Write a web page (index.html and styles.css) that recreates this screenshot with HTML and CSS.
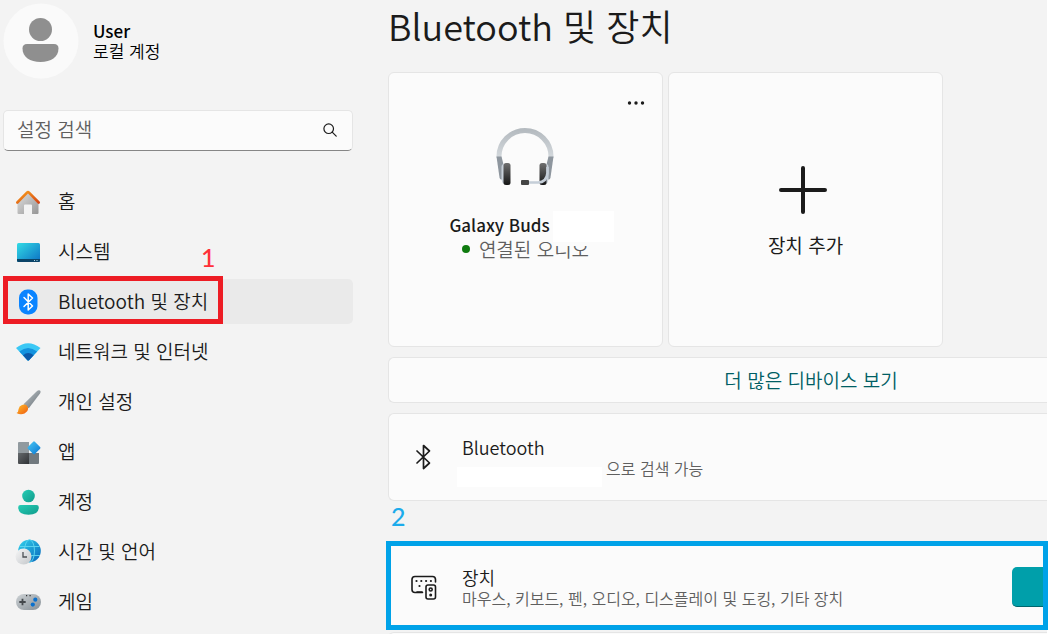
FILE: index.html
```html
<!DOCTYPE html>
<html lang="ko">

<head>
  <meta charset="UTF-8">
  <title>Bluetooth 및 장치</title>
  <link rel="stylesheet" href="styles.css">
</head>

<body>
  <div class="window">
    <aside class="sidebar">
      <div class="profile">
        <svg class="avatar" viewBox="0 0 76 76">
          <circle cx="38" cy="38" r="37.500" fill="#fafafa" />
          <circle cx="37.500" cy="26.500" r="11.500" fill="#8f8f8f" />
          <path d="M24 41h27q4.500 0 4.500 4.500C55.500 54 48 59 37.500 59S19.500 54 19.500 45.500Q19.500 41 24 41z" fill="#8f8f8f" />
        </svg>
        <div>
          <div class="profile-name">User</div>
          <div class="profile-type">로컬 계정</div>
        </div>
      </div>

      <div class="search">
        <input type="text" id="search" class="search-input" placeholder="설정 검색" aria-label="설정 검색">
        <svg class="search-icon" viewBox="0 0 14 14" fill="none" stroke="#1b1b1b" stroke-width="1.200" stroke-linecap="round">
          <circle cx="5.700" cy="5.700" r="4.800" />
          <path d="M9.200 9.200L13.200 13.200" />
        </svg>
      </div>

      <nav class="nav">
        <a class="nav-item" href="#">
          <svg class="nav-icon" viewBox="0 0 26 26">
            <defs>
              <linearGradient id="wall" x1="0" y1="0" x2="1" y2="1"><stop offset="0" stop-color="#e0e0e0" /><stop offset="1" stop-color="#969696" /></linearGradient>
              <linearGradient id="roof" x1="0" y1="0" x2="1" y2="1"><stop offset="0" stop-color="#f9a01b" /><stop offset="1" stop-color="#d64515" /></linearGradient>
            </defs>
            <path d="M13 3L23.500 13.500V24q0 1-1 1H17V16.500q0-1-1-1H10q-1 0-1 1V25H3.500q-1 0-1-1V13.500z" fill="url(#wall)" />
            <path d="M2.300 13.500L12 3.600q1-1 2 0L23.700 13.500" fill="none" stroke="url(#roof)" stroke-width="2.600" stroke-linecap="round" />
          </svg>
          <span class="nav-text">홈</span>
        </a>
        <a class="nav-item" href="#">
          <svg class="nav-icon" viewBox="0 0 26 26">
            <defs>
              <linearGradient id="screen" x1="0" y1="0" x2="1" y2="1"><stop offset="0" stop-color="#32dbe5" /><stop offset="1" stop-color="#0c70c4" /></linearGradient>
            </defs>
            <rect x="2" y="4" width="23" height="19" rx="1.500" fill="url(#screen)" />
            <path d="M2 20h23v1.500q0 1.500-1.500 1.500h-20Q2 23 2 21.500z" fill="#0b4468" />
            <path d="M19 21.500h1M21.500 21.500h1" stroke="#b3d8e8" />
          </svg>
          <span class="nav-text">시스템</span>
        </a>
        <a class="nav-item active" href="#">
          <svg class="nav-icon" viewBox="0 0 26 26">
            <rect x="4" y="0.500" width="18.500" height="25" rx="8.500" fill="#0a84ff" />
            <path d="M9 8.500L17.500 17 13.200 21V5L17.500 9 9 17.500" fill="none" stroke="#fff" stroke-width="1.500" stroke-linejoin="round" stroke-linecap="round" />
          </svg>
          <span class="nav-text">Bluetooth 및 장치</span>
        </a>
        <a class="nav-item" href="#">
          <svg class="nav-icon" viewBox="0 0 26 26">
            <path d="M1 9Q13-0.500 25.500 9L14 21.200q-.8.800-1.600 0z" fill="#3bc8f5" />
            <path d="M4.400 12.500Q13 5.500 22.100 12.500L14 21.200q-.8.800-1.600 0z" fill="#1492de" />
            <path d="M8 16.200Q13.200 12 18.600 16.200L14 21.200q-.8.800-1.600 0z" fill="#0d59a8" />
          </svg>
          <span class="nav-text">네트워크 및 인터넷</span>
        </a>
        <a class="nav-item" href="#">
          <svg class="nav-icon" viewBox="0 0 26 26">
            <defs>
              <linearGradient id="handle" x1="0" y1="0" x2="1" y2="1"><stop offset="0" stop-color="#c6cdd1" /><stop offset="1" stop-color="#626a70" /></linearGradient>
              <linearGradient id="brush" x1="0" y1="0" x2="1" y2="1"><stop offset="0" stop-color="#ffbf29" /><stop offset="1" stop-color="#ef5a10" /></linearGradient>
            </defs>
            <path d="M8.500 15.200L21.800 2.200Q23.500.7 25 1.500q1.200 1.200 0 3L13.800 19.200z" fill="url(#handle)" />
            <path d="M7 16Q11 14.500 12.800 18 14 22 9.500 24.500 5.500 26.300 1.500 24 3.500 23 3.600 20 4 17 7 16z" fill="url(#brush)" />
          </svg>
          <span class="nav-text">개인 설정</span>
        </a>
        <a class="nav-item" href="#">
          <svg class="nav-icon" viewBox="0 0 26 26">
            <defs>
              <linearGradient id="dark" x1="0" y1="0" x2="1" y2="1"><stop offset="0" stop-color="#65696c" /><stop offset="1" stop-color="#303336" /></linearGradient>
              <linearGradient id="tile" x1="0" y1="0" x2="1" y2="1"><stop offset="0" stop-color="#4ac8f5" /><stop offset="1" stop-color="#0876d2" /></linearGradient>
            </defs>
            <path d="M4 3h10v11H3V4q0-1 1-1z" fill="#919a9f" />
            <path d="M3 14h11v11H4q-1 0-1-1z" fill="url(#dark)" />
            <path d="M14 14h10v10q0 1-1 1h-9z" fill="#71797e" />
            <path d="M18.200 2.700q.8-.8 1.600 0l5.300 5.400q.8.800 0 1.600l-5.300 5.400q-.8.800-1.600 0l-5.300-5.400q-.8-.8 0-1.600z" fill="url(#tile)" />
          </svg>
          <span class="nav-text">앱</span>
        </a>
        <a class="nav-item" href="#">
          <svg class="nav-icon" viewBox="0 0 26 26">
            <defs>
              <linearGradient id="person" x1="0" y1="0" x2="1" y2="1"><stop offset="0" stop-color="#26cdb5" /><stop offset="1" stop-color="#109b8b" /></linearGradient>
            </defs>
            <circle cx="13.500" cy="7" r="6.300" fill="url(#person)" />
            <path d="M5.500 16h16q2.300 0 2.300 2.300 0 7.500-10.300 7.500T3.200 18.300Q3.200 16 5.500 16z" fill="url(#person)" />
          </svg>
          <span class="nav-text">계정</span>
        </a>
        <a class="nav-item" href="#">
          <svg class="nav-icon" viewBox="0 0 26 26">
            <defs>
              <linearGradient id="globe" x1="0" y1="0" x2="1" y2="1"><stop offset="0" stop-color="#32d3ed" /><stop offset="1" stop-color="#0866bb" /></linearGradient>
              <linearGradient id="clock" x1="0" y1="0" x2="1" y2="1"><stop offset="0" stop-color="#f7f7f7" /><stop offset="1" stop-color="#c3c7ca" /></linearGradient>
            </defs>
            <circle cx="14.500" cy="12" r="11.300" fill="url(#globe)" />
            <g fill="none" stroke="#61d7f0" stroke-width=".9">
              <ellipse cx="14.500" cy="12" rx="5" ry="11.300" />
              <path d="M4.500 7.500h20M3.500 16.500h21.500" />
            </g>
            <circle cx="8.500" cy="17.500" r="8" fill="url(#clock)" />
            <path d="M8 13v5h4" fill="none" stroke="#4d5256" stroke-width="1.300" />
          </svg>
          <span class="nav-text">시간 및 언어</span>
        </a>
        <a class="nav-item" href="#">
          <svg class="nav-icon" viewBox="0 0 26 26">
            <defs>
              <linearGradient id="pad" x1="0" y1="0" x2="1" y2="1"><stop offset="0" stop-color="#cdd2d5" /><stop offset="1" stop-color="#868f96" /></linearGradient>
            </defs>
            <rect x="1" y="5" width="25" height="16" rx="8" fill="url(#pad)" />
            <path d="M7.500 9.800v6.400M4.300 13h6.400" stroke="#43484c" stroke-width="1.800" />
            <circle cx="20.300" cy="10.700" r="2.100" fill="#0a70cd" />
            <circle cx="17.800" cy="15.600" r="2.100" fill="#0a70cd" />
            <path d="M11 6.700h1.200M14.500 6.700h1.200" stroke="#333" stroke-width="1.200" />
          </svg>
          <span class="nav-text">게임</span>
        </a>
        <div class="mark mark-red"></div>
        <div class="step step-red">1</div>
      </nav>
    </aside>

    <main class="main">
      <h1 class="title">Bluetooth 및 장치</h1>

      <div class="cards">
        <div class="card">
          <button class="more" aria-label="추가 옵션">
            <svg class="more-icon" viewBox="0 0 18 4" fill="#1b1b1b">
              <circle cx="2.500" cy="2" r="1.700" />
              <circle cx="9" cy="2" r="1.700" />
              <circle cx="15.500" cy="2" r="1.700" />
            </svg>
          </button>
          <svg class="headset" viewBox="0 0 60 60">
            <defs>
              <linearGradient id="band" x1="0" y1="0" x2="0" y2="1"><stop offset="0" stop-color="#b5bbc0" /><stop offset="1" stop-color="#d4d9dd" /></linearGradient>
              <linearGradient id="cup" x1="0" y1="0" x2="0" y2="1"><stop offset="0" stop-color="#707070" /><stop offset="1" stop-color="#161616" /></linearGradient>
            </defs>
            <path d="M3 31V29.500a26 26 0 0 1 52 0v1.500" fill="none" stroke="url(#band)" stroke-width="5" />
            <path d="M0.500 29.500h5l2 8v15H5q-1 0-1.500-2z" fill="#8e969e" />
            <path d="M57.500 29.500h-5l-2 8v15h2.500q1 0 1.500-2z" fill="#8e969e" />
            <path d="M8 37q-2.500 0-2.500 3v11q0 5 2.500 6zM50 37q2.500 0 2.500 3v11q0 5-2.500 6z" fill="#c9d1da" />
            <rect x="7.500" y="36" width="7" height="22" rx="2.500" fill="url(#cup)" />
            <rect x="43.500" y="36" width="7" height="22" rx="2.500" fill="url(#cup)" />
            <path d="M31 55.500h11Q50.500 55.500 51.500 46V40" fill="none" stroke="#c5ced8" stroke-width="2.600" />
            <rect x="25" y="53" width="8" height="5" rx="1" fill="#454545" />
          </svg>
          <div class="device-name">Galaxy Buds<span class="blank blank-name"></span></div>
          <div class="device-state"><span class="dot"></span>연결된 오디오</div>
        </div>
        <button class="card add">
          <svg class="plus" viewBox="0 0 50 50" stroke="#1b1b1b" stroke-width="4" stroke-linecap="round">
            <path d="M25 3v44M3 25h44" />
          </svg>
          <span>장치 추가</span>
        </button>
      </div>

      <a class="row more-devices" href="#">더 많은 디바이스 보기</a>

      <div class="row setting">
        <svg class="row-icon" viewBox="0 0 28 28" fill="none" stroke="#1b1b1b" stroke-width="1.700" stroke-linejoin="round" stroke-linecap="round">
          <path d="M8 8L20.500 20 14.500 25.500V2.500L20.500 8 8 20" />
        </svg>
        <div>
          <div class="row-title">Bluetooth</div>
          <div class="row-text"><span class="blank blank-pc"></span>으로 검색 가능</div>
        </div>
      </div>

      <div class="step step-blue">2</div>

      <div class="row setting mark-blue">
        <svg class="row-icon" viewBox="0 0 28 28" fill="none" stroke="#1b1b1b" stroke-width="1.600" stroke-linecap="round">
          <path d="M13.500 19.500H6q-3 0-3-3V6.500q0-3 3-3H23.500q3 0 3 3V9" />
          <path d="M8 19h5" />
          <g fill="#1b1b1b" stroke="none">
            <circle cx="7.500" cy="8" r="1.100" />
            <circle cx="12.300" cy="8" r="1.100" />
            <circle cx="17.100" cy="8" r="1.100" />
            <circle cx="21.900" cy="8" r="1.100" />
            <circle cx="10.500" cy="13" r="1.100" />
            <circle cx="21.700" cy="22" r="1.500" />
          </g>
          <rect x="17" y="12" width="9.500" height="14" rx="2" />
          <circle cx="21.700" cy="16.500" r="1.500" />
        </svg>
        <div>
          <div class="row-title">장치</div>
          <div class="row-text">마우스, 키보드, 펜, 오디오, 디스플레이 및 도킹, 기타 장치</div>
        </div>
        <button class="add-button" aria-label="장치 추가"></button>
      </div>

      <div class="row next"></div>
    </main>
  </div>
</body>

</html>
```
FILE: styles.css
```css
* {
  box-sizing: border-box;
}

body {
  margin: 0;
  padding-right: 5px;
  height: 100vh;
  overflow: hidden;
  background-color: #fff;
  color: #1b1b1b;
  font-family: "Noto Sans CJK KR", "Noto Sans", sans-serif;
  font-size: 19px;
  font-weight: 350;
}

button,
input {
  font: inherit;
  color: inherit;
}

a {
  color: inherit;
  text-decoration: none;
}

svg {
  display: block;
  flex: none;
}

.window {
  display: flex;
  min-height: 100vh;
  background-color: #f3f3f3;
}

.sidebar {
  flex: none;
  width: 353px;
  margin-right: 35px;
  padding: 3px 0 0 3px;
}

.profile {
  display: flex;
  align-items: center;
  gap: 14px;
  height: 76px;
  margin-bottom: 31px;
  color: #000;
  font-size: 17px;
  line-height: 20px;
}

.avatar {
  width: 76px;
  height: 76px;
}

.profile-name {
  font-weight: 500;
}

/* search box */
.search {
  position: relative;
  margin-bottom: 28px;
}

.search-input {
  display: block;
  width: 100%;
  height: 41px;
  padding: 0 48px 4px 13px;
  border: 1px solid #e5e5e5;
  border-bottom-color: #868686;
  border-radius: 5px;
  background-color: #fbfbfb;
  outline: none;
}

.search-input::placeholder {
  color: #5f5f5f;
  opacity: 1;
}

.search-icon {
  position: absolute;
  top: 13px;
  right: 16px;
  width: 14px;
  height: 14px;
}

/* navigation */
.nav {
  position: relative;
  display: flex;
  flex-direction: column;
  gap: 5px;
}

.nav-item {
  display: flex;
  align-items: center;
  gap: 17px;
  height: 45px;
  padding-left: 12px;
  border-radius: 5px;
}

.nav-item.active {
  background-color: #eaeaea;
}

.nav-icon {
  width: 26px;
  height: 26px;
}

.nav-text {
  padding-bottom: 2px;
}

/* numbered marks */
.mark {
  position: absolute;
  border: 5px solid #ed1c24;
}

.mark-red {
  top: 97px;
  left: 0;
  width: 220px;
  height: 48px;
}

.step {
  font-family: Lato, sans-serif;
  font-size: 25px;
  font-weight: 500;
  line-height: 30px;
}

.step-red {
  position: absolute;
  top: 63px;
  left: 198px;
  color: #ff3038;
}

.step-blue {
  padding-left: 3px;
  margin-bottom: 10px;
  color: #1cabeb;
}

/* content */
.main {
  flex: 1;
  min-width: 0;
}

.title {
  margin: 0 0 22px;
  font-size: 36px;
  font-weight: 350;
  line-height: 50px;
}

.cards {
  display: flex;
  gap: 5px;
  margin-bottom: 10px;
}

.card {
  position: relative;
  display: flex;
  flex-direction: column;
  align-items: center;
  width: 275px;
  height: 275px;
  padding: 54px 0 0;
  border: 1px solid #e5e5e5;
  border-radius: 6px;
  background-color: #fbfbfb;
}

.more {
  position: absolute;
  top: 16px;
  right: 10px;
  padding: 12px 7px;
  border: 0;
  background: none;
}

.more-icon {
  width: 18px;
  height: 4px;
}

.headset {
  width: 60px;
  height: 60px;
  margin-bottom: 26px;
}

.device-name {
  position: relative;
  padding-right: 52px;
  font-size: 17px;
  font-weight: 500;
  line-height: 24px;
}

.device-state {
  display: flex;
  align-items: center;
  gap: 9px;
  color: #5f5f5f;
  line-height: 24px;
}

.dot {
  width: 8px;
  height: 8px;
  border-radius: 50%;
  background-color: #0f7b0f;
}

.blank {
  background-color: #fff;
}

.blank-name {
  position: absolute;
  z-index: 1;
  top: -2px;
  right: -12px;
  width: 61px;
  height: 35px;
  border-bottom: 4px solid #fbfbfb;
}

.blank-pc {
  width: 145px;
  height: 20px;
  margin: 9px 4px -9px -5px;
}

.add {
  gap: 16px;
  padding-top: 92px;
  font-weight: 400;
}

.plus {
  width: 50px;
  height: 50px;
  margin-right: 6px;
}

.row {
  display: flex;
  align-items: center;
  border: 1px solid #e5e5e5;
  border-right: 0;
  border-radius: 6px 0 0 6px;
  background-color: #fbfbfb;
}

.more-devices {
  justify-content: center;
  height: 46px;
  padding: 0 0 2px 186px;
  margin-bottom: 10px;
  color: #005e64;
}

.setting {
  gap: 25px;
  height: 88px;
  padding-left: 20px;
}

.row-icon {
  width: 28px;
  height: 28px;
}

.row-title {
  font-size: 18px;
  line-height: 22px;
}

.row-text {
  display: flex;
  align-items: center;
  color: #5f5f5f;
  font-size: 16px;
  line-height: 20px;
}

.mark-blue {
  height: 89px;
  margin: 0 -1px 2px -2px;
  padding: 2px 0 0 18px;
  border: 5px solid #00a2e8;
  border-radius: 0;
}

.add-button {
  width: 31px;
  height: 40px;
  margin-left: auto;
  padding: 0;
  border: 0;
  border-bottom: 1px solid #00666d;
  border-radius: 5px 0 0 5px;
  background-color: #009faa;
}

.next {
  height: 88px;
}
```
